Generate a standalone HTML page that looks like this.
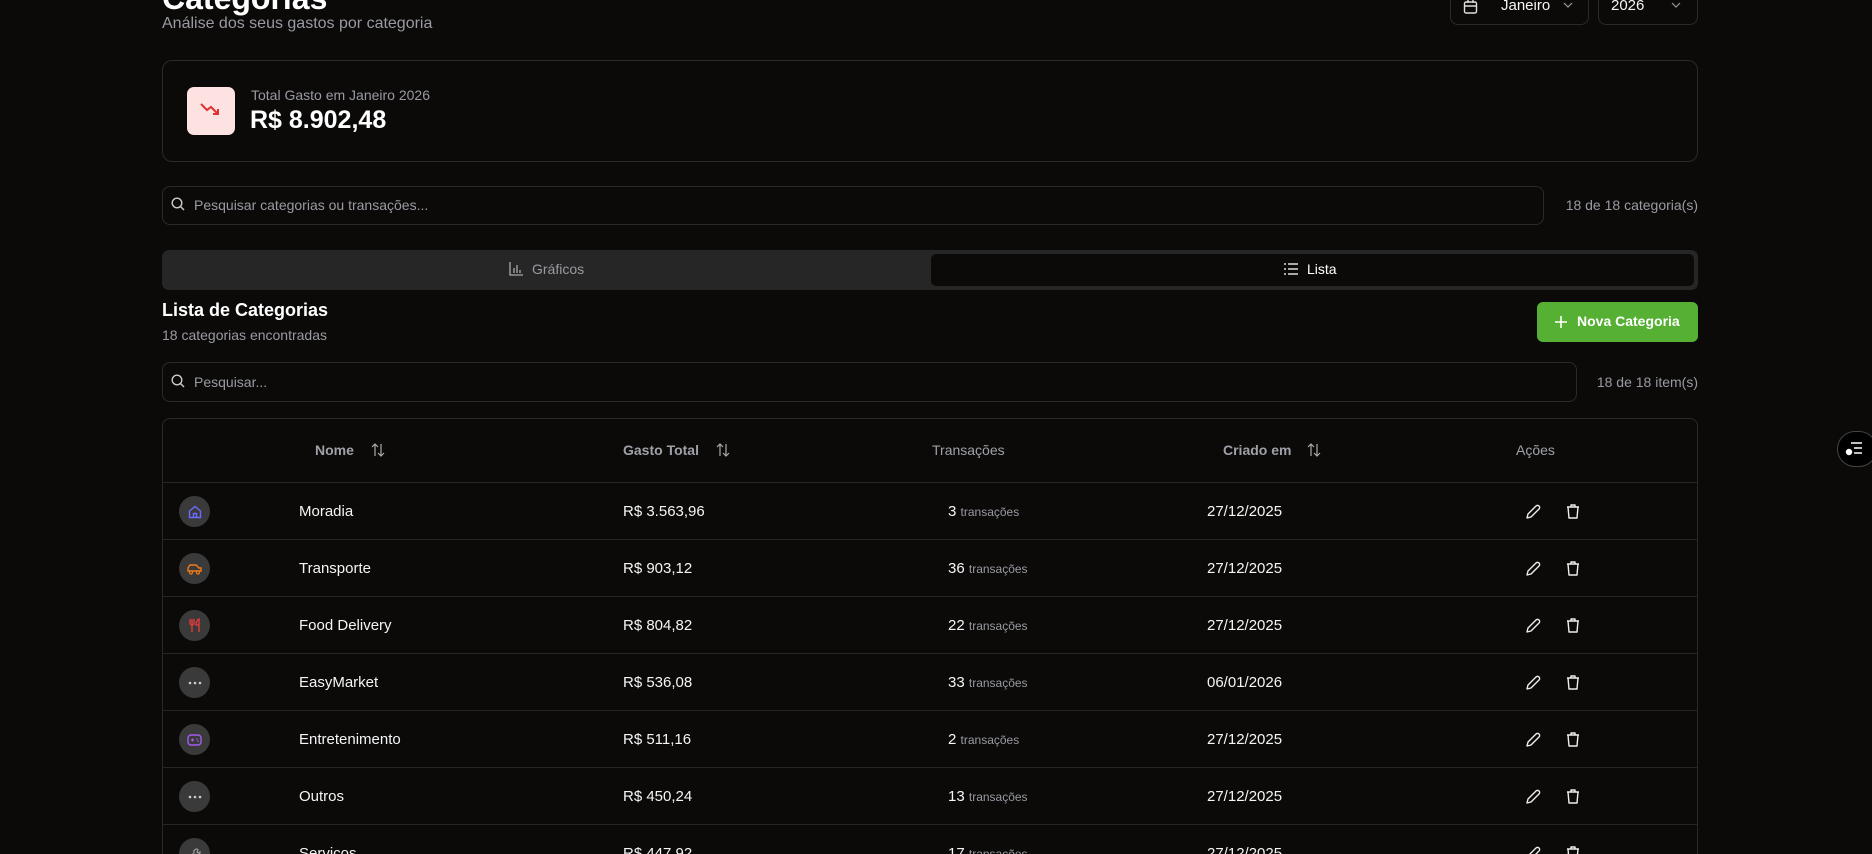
<!DOCTYPE html>
<html><head><meta charset="utf-8">
<style>
*{box-sizing:border-box;margin:0;padding:0}
html,body{width:1872px;height:854px;overflow:hidden;background:#0b0a09;font-family:"Liberation Sans",sans-serif;color:#f5f5f5}
#w{position:relative;width:1872px;height:854px;overflow:hidden}
.abs{position:absolute}
.box{position:absolute;border:1px solid #2a2a2a;border-radius:8px}
.muted{color:#9a9aa2}
.row{position:absolute;left:162px;width:1536px;height:57px;border-top:1px solid #262626}
.row div{position:absolute;top:0;line-height:57px;font-size:15px}
.ic{position:absolute;left:17px;top:13px;width:31px;height:31px;border-radius:50%;background:#3a3a3a;display:flex;align-items:center;justify-content:center}
.th{position:absolute;top:0;line-height:64px;font-size:14px;color:#a0a0a8;font-weight:bold}
</style></head><body><div id="w">

<div class="abs" style="left:162px;top:-20px;font-size:32px;font-weight:bold;color:#fff">Categorias</div>
<div class="abs muted" style="left:162px;top:15px;font-size:16px">Análise dos seus gastos por categoria</div>

<div class="box" style="left:1450px;top:-12px;width:139px;height:37px"></div>
<svg class="abs" style="left:1463px;top:0" width="15" height="14" viewBox="0 0 15 14"><rect x="1.5" y="2" width="12" height="11" rx="1.5" fill="none" stroke="#ddd" stroke-width="1.4"/><path d="M1.5 6h12M5 0v3M10 0v3" stroke="#ddd" stroke-width="1.4"/></svg>
<div class="abs" style="left:1501px;top:-3px;font-size:15px">Janeiro</div>
<svg class="abs" style="left:1563px;top:2px" width="10" height="6"><path d="M1 1l4 4 4-4" fill="none" stroke="#999" stroke-width="1.2"/></svg>
<div class="box" style="left:1598px;top:-12px;width:100px;height:37px"></div>
<div class="abs" style="left:1611px;top:-3px;font-size:15px">2026</div>
<svg class="abs" style="left:1671px;top:2px" width="10" height="6"><path d="M1 1l4 4 4-4" fill="none" stroke="#999" stroke-width="1.2"/></svg>

<div class="box" style="left:162px;top:60px;width:1536px;height:102px;border-radius:10px"></div>
<div class="abs" style="left:187px;top:87px;width:48px;height:48px;border-radius:7px;background:#fde2e2"></div>
<svg class="abs" style="left:200px;top:102px" width="22" height="16" viewBox="0 0 22 16"><path d="M1 2l6 6 4-3 7 7M13 12h5V7" fill="none" stroke="#e03131" stroke-width="2"/></svg>
<div class="abs muted" style="left:251px;top:87px;font-size:14px">Total Gasto em Janeiro 2026</div>
<div class="abs" style="left:250px;top:106px;font-size:25px;font-weight:bold;color:#fff">R$ 8.902,48</div>

<div class="box" style="left:162px;top:186px;width:1382px;height:39px"></div>
<svg class="abs" style="left:171px;top:197px" width="14" height="14" viewBox="0 0 14 14"><circle cx="6" cy="6" r="4.8" fill="none" stroke="#ccc" stroke-width="1.4"/><path d="M9.5 9.5l3.5 3.5" stroke="#ccc" stroke-width="1.4"/></svg>
<div class="abs muted" style="left:194px;top:197px;font-size:14px">Pesquisar categorias ou transações...</div>
<div class="abs muted" style="right:174px;top:197px;font-size:14px">18 de 18 categoria(s)</div>

<div class="abs" style="left:162px;top:250px;width:1536px;height:40px;background:#262626;border-radius:7px"></div>
<div class="abs" style="left:931px;top:254px;width:763px;height:32px;background:#0b0a09;border-radius:5px"></div>
<svg class="abs" style="left:509px;top:262px" width="14" height="14" viewBox="0 0 14 14"><path d="M1 0v13h13M5 11V6M8 11V3M11 11V8" fill="none" stroke="#aaa" stroke-width="1.3"/></svg>
<div class="abs muted" style="left:532px;top:261px;font-size:14px">Gráficos</div>
<svg class="abs" style="left:1284px;top:263px" width="14" height="12" viewBox="0 0 14 12"><path d="M0 1h2M0 6h2M0 11h2M4 1h10M4 6h10M4 11h10" stroke="#ddd" stroke-width="1.4"/></svg>
<div class="abs" style="left:1307px;top:261px;font-size:14px;color:#fff">Lista</div>

<div class="abs" style="left:162px;top:300px;font-size:18px;font-weight:bold;color:#fff">Lista de Categorias</div>
<div class="abs muted" style="left:162px;top:327px;font-size:14px">18 categorias encontradas</div>
<div class="abs" style="left:1537px;top:302px;width:161px;height:40px;background:#55b033;border-radius:6px"></div>
<svg class="abs" style="left:1555px;top:316px" width="12" height="12"><path d="M6 0v12M0 6h12" stroke="#fff" stroke-width="1.6"/></svg>
<div class="abs" style="left:1577px;top:313px;font-size:14px;font-weight:bold;color:#fff">Nova Categoria</div>

<div class="box" style="left:162px;top:362px;width:1415px;height:40px"></div>
<svg class="abs" style="left:171px;top:374px" width="14" height="14" viewBox="0 0 14 14"><circle cx="6" cy="6" r="4.8" fill="none" stroke="#ccc" stroke-width="1.4"/><path d="M9.5 9.5l3.5 3.5" stroke="#ccc" stroke-width="1.4"/></svg>
<div class="abs muted" style="left:194px;top:374px;font-size:14px">Pesquisar...</div>
<div class="abs muted" style="right:174px;top:374px;font-size:14px">18 de 18 item(s)</div>

<div class="box" style="left:162px;top:418px;width:1536px;height:436px;border-radius:8px 8px 0 0;border-bottom:none"></div>
<div class="abs" style="left:162px;top:418px;width:1536px;height:64px">
 <div class="th" style="left:153px">Nome</div>
 <svg class="abs" style="left:209px;top:25px" width="14" height="14" viewBox="0 0 14 14"><path d="M4 13V1M1 4l3-3 3 3M10 1v12M7 10l3 3 3-3" fill="none" stroke="#aaa" stroke-width="1.2"/></svg>
 <div class="th" style="left:461px">Gasto Total</div>
 <svg class="abs" style="left:554px;top:25px" width="14" height="14" viewBox="0 0 14 14"><path d="M4 13V1M1 4l3-3 3 3M10 1v12M7 10l3 3 3-3" fill="none" stroke="#aaa" stroke-width="1.2"/></svg>
 <div class="th" style="left:770px;font-weight:normal">Transações</div>
 <div class="th" style="left:1061px">Criado em</div>
 <svg class="abs" style="left:1145px;top:25px" width="14" height="14" viewBox="0 0 14 14"><path d="M4 13V1M1 4l3-3 3 3M10 1v12M7 10l3 3 3-3" fill="none" stroke="#aaa" stroke-width="1.2"/></svg>
 <div class="th" style="left:1354px;font-weight:normal">Ações</div>
</div>

<div class="row" style="top:482px"><span class="ic"><svg width="14" height="14" viewBox="0 0 14 14"><path d="M1.5 6L7 1.5 12.5 6v6.5h-11zM5.5 12.5V8.5h3v4" fill="none" stroke="#6b6bff" stroke-width="1.4"/></svg></span><div style="left:137px">Moradia</div><div style="left:461px">R$ 3.563,96</div><div style="left:786px">3 <span class="muted" style="font-size:12px">transações</span></div><div style="left:1045px">27/12/2025</div></div>
<div class="row" style="top:539px"><span class="ic"><svg width="15" height="12" viewBox="0 0 15 12"><path d="M1 8V5l2-3h6l3 3h2v3H1z" fill="none" stroke="#f07a1a" stroke-width="1.4"/><circle cx="4" cy="9.5" r="1.5" fill="#3a3a3a" stroke="#f07a1a" stroke-width="1.2"/><circle cx="11" cy="9.5" r="1.5" fill="#3a3a3a" stroke="#f07a1a" stroke-width="1.2"/></svg></span><div style="left:137px">Transporte</div><div style="left:461px">R$ 903,12</div><div style="left:786px">36 <span class="muted" style="font-size:12px">transações</span></div><div style="left:1045px">27/12/2025</div></div>
<div class="row" style="top:596px"><span class="ic"><svg width="14" height="15" viewBox="0 0 14 15"><path d="M2 1v4a2 2 0 004 0V1M4 1v13M11 14V1c-2 1-3 3-3 6h3" fill="none" stroke="#e03b3b" stroke-width="1.4"/></svg></span><div style="left:137px">Food Delivery</div><div style="left:461px">R$ 804,82</div><div style="left:786px">22 <span class="muted" style="font-size:12px">transações</span></div><div style="left:1045px">27/12/2025</div></div>
<div class="row" style="top:653px"><span class="ic"><svg width="14" height="4"><circle cx="2" cy="2" r="1.3" fill="#ccc"/><circle cx="7" cy="2" r="1.3" fill="#ccc"/><circle cx="12" cy="2" r="1.3" fill="#ccc"/></svg></span><div style="left:137px">EasyMarket</div><div style="left:461px">R$ 536,08</div><div style="left:786px">33 <span class="muted" style="font-size:12px">transações</span></div><div style="left:1045px">06/01/2026</div></div>
<div class="row" style="top:710px"><span class="ic"><svg width="15" height="12" viewBox="0 0 15 12"><rect x="1" y="1" width="13" height="10" rx="3" fill="none" stroke="#a35cf0" stroke-width="1.4"/><path d="M4 6h3M5.5 4.5v3" stroke="#a35cf0" stroke-width="1.2"/><circle cx="10" cy="5" r=".8" fill="#a35cf0"/><circle cx="11" cy="7" r=".8" fill="#a35cf0"/></svg></span><div style="left:137px">Entretenimento</div><div style="left:461px">R$ 511,16</div><div style="left:786px">2 <span class="muted" style="font-size:12px">transações</span></div><div style="left:1045px">27/12/2025</div></div>
<div class="row" style="top:767px"><span class="ic"><svg width="14" height="4"><circle cx="2" cy="2" r="1.3" fill="#ccc"/><circle cx="7" cy="2" r="1.3" fill="#ccc"/><circle cx="12" cy="2" r="1.3" fill="#ccc"/></svg></span><div style="left:137px">Outros</div><div style="left:461px">R$ 450,24</div><div style="left:786px">13 <span class="muted" style="font-size:12px">transações</span></div><div style="left:1045px">27/12/2025</div></div>
<div class="row" style="top:824px"><span class="ic"><svg width="14" height="14" viewBox="0 0 14 14"><path d="M9 2a3 3 0 00-3 4L2 10l2 2 4-4a3 3 0 004-3l-2 1-1-1 1-2z" fill="none" stroke="#999" stroke-width="1.3"/></svg></span><div style="left:137px">Serviços</div><div style="left:461px">R$ 447,92</div><div style="left:786px">17 <span class="muted" style="font-size:12px">transações</span></div><div style="left:1045px">27/12/2025</div></div>

<svg class="abs" style="left:1524px;top:503px" width="60" height="360" viewBox="0 0 60 360">
<defs><g id="a" fill="none" stroke="#eee" stroke-width="1.4" stroke-linejoin="round"><path d="M3 15l1-4 8-8a1.4 1.4 0 013 3l-8 8z"/><path d="M43 4h12M47 4V2h4v2M44 4l1 11h8l1-11"/></g></defs>
<use href="#a" y="0"/><use href="#a" y="57"/><use href="#a" y="114"/><use href="#a" y="171"/><use href="#a" y="228"/><use href="#a" y="285"/><use href="#a" y="342"/>
</svg>

<div class="abs" style="left:1837px;top:431px;width:40px;height:36px;border-radius:18px;background:#000;border:1px solid #444"></div>
<svg class="abs" style="left:1845px;top:441px" width="18" height="16" viewBox="0 0 18 16"><path d="M6 2h11M9 7h8M9 12h8" stroke="#fff" stroke-width="1.5"/><circle cx="4" cy="11" r="3.2" fill="#fff"/></svg>

</div></body></html>
